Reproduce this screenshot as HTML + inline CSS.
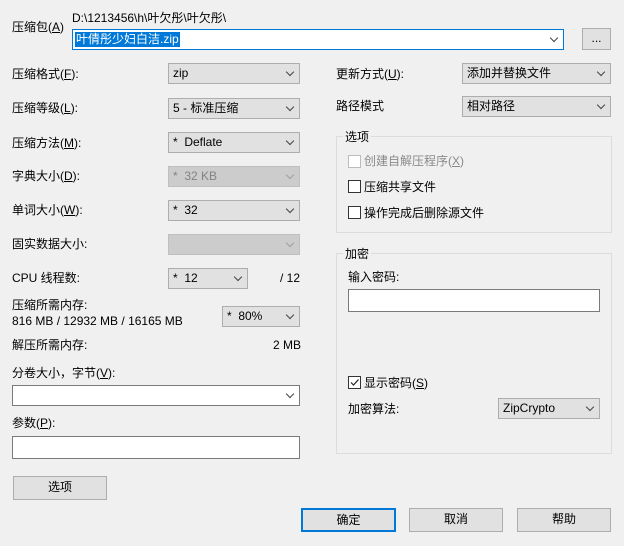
<!DOCTYPE html>
<html><head><meta charset="utf-8"><style>
body{margin:0;width:624px;height:546px;background:#f0f0f0;position:relative;overflow:hidden;font-family:"Liberation Sans","Noto Sans CJK SC",sans-serif;font-size:12px;color:#000}
.a{position:absolute;white-space:nowrap;line-height:14px}
.cb{position:absolute;box-sizing:border-box;border:1px solid #adadad;background:#e1e1e1;height:21px;line-height:19px;padding-left:4px}
.cb::after{content:"";position:absolute;right:6px;top:5px;width:5px;height:5px;border-right:1px solid #444;border-bottom:1px solid #444;transform:rotate(45deg)}
.dis{background:#cccccc;border-color:#bfbfbf;color:#838383}
.dis::after{border-color:#a0a0a0}
.w{position:absolute;box-sizing:border-box;border:1px solid #7a7a7a;background:#fff}
.btn{position:absolute;box-sizing:border-box;border:1px solid #adadad;background:#e1e1e1;text-align:center;line-height:21px}
.g{position:absolute;box-sizing:border-box;border:1px solid #dcdcdc}
.gt{position:absolute;background:#f0f0f0;padding:0 2px;line-height:14px}
.ck{position:absolute;width:11px;height:11px;border:1px solid #333;background:#fff}
</style></head><body>
<div class="a" style="left:12px;top:20px">压缩包(<u>A</u>)</div>
<div class="a" style="left:72px;top:11px">D:\1213456\h\叶欠彤\叶欠彤\</div>
<div class="w" style="left:72px;top:29px;width:492px;height:21px;border-color:#0078d7"><span style="position:absolute;left:2px;top:2px;background:#0078d7;color:#fff;line-height:15px;padding:0 1px">叶倩彤少妇白洁.zip</span></div>
<div class="cb" style="left:548px;top:30px;width:15px;height:19px;border:none;background:transparent"></div>
<div class="btn" style="left:582px;top:28px;width:29px;height:22px;line-height:18px">...</div>

<div class="a" style="left:12px;top:67px">压缩格式(<u>F</u>):</div>
<div class="cb" style="left:168px;top:63px;width:132px">zip</div>
<div class="a" style="left:12px;top:101px">压缩等级(<u>L</u>):</div>
<div class="cb" style="left:168px;top:98px;width:132px">5 - 标准压缩</div>
<div class="a" style="left:12px;top:136px">压缩方法(<u>M</u>):</div>
<div class="cb" style="left:168px;top:132px;width:132px">*&nbsp; Deflate</div>
<div class="a" style="left:12px;top:169px">字典大小(<u>D</u>):</div>
<div class="cb dis" style="left:168px;top:166px;width:132px">*&nbsp; 32 KB</div>
<div class="a" style="left:12px;top:203px">单词大小(<u>W</u>):</div>
<div class="cb" style="left:168px;top:200px;width:132px">*&nbsp; 32</div>
<div class="a" style="left:12px;top:237px">固实数据大小:</div>
<div class="cb dis" style="left:168px;top:234px;width:132px"></div>
<div class="a" style="left:12px;top:271px">CPU 线程数:</div>
<div class="cb" style="left:168px;top:268px;width:80px">*&nbsp; 12</div>
<div class="a" style="left:280px;top:271px">/ 12</div>
<div class="a" style="left:12px;top:298px">压缩所需内存:</div>
<div class="a" style="left:12px;top:314px">816 MB / 12932 MB / 16165 MB</div>
<div class="cb" style="left:222px;top:306px;width:78px">*&nbsp; 80%</div>
<div class="a" style="left:12px;top:338px">解压所需内存:</div>
<div class="a" style="left:273px;top:338px">2 MB</div>
<div class="a" style="left:12px;top:366px">分卷大小，字节(<u>V</u>):</div>
<div class="w cb" style="left:12px;top:385px;width:288px;background:#fff;border-color:#7a7a7a"></div>
<div class="a" style="left:12px;top:416px">参数(<u>P</u>):</div>
<div class="w" style="left:12px;top:436px;width:288px;height:23px"></div>
<div class="btn" style="left:13px;top:476px;width:94px;height:24px">选项</div>

<div class="a" style="left:336px;top:67px">更新方式(<u>U</u>):</div>
<div class="cb" style="left:462px;top:63px;width:149px">添加并替换文件</div>
<div class="a" style="left:336px;top:99px">路径模式</div>
<div class="cb" style="left:462px;top:96px;width:149px">相对路径</div>

<div class="g" style="left:336px;top:136px;width:276px;height:97px"></div>
<div class="gt" style="left:343px;top:130px">选项</div>
<div class="ck" style="left:348px;top:155px;border-color:#bcbcbc"></div>
<div class="a" style="left:364px;top:154px;color:#8a8a8a">创建自解压程序(<u>X</u>)</div>
<div class="ck" style="left:348px;top:180px"></div>
<div class="a" style="left:364px;top:180px">压缩共享文件</div>
<div class="ck" style="left:348px;top:206px"></div>
<div class="a" style="left:364px;top:206px">操作完成后删除源文件</div>

<div class="g" style="left:336px;top:253px;width:276px;height:201px"></div>
<div class="gt" style="left:343px;top:247px">加密</div>
<div class="a" style="left:348px;top:270px">输入密码:</div>
<div class="w" style="left:348px;top:289px;width:252px;height:23px"></div>
<div class="ck" style="left:348px;top:376px"><svg width="11" height="11" style="position:absolute;left:0;top:0"><path d="M2 5.5 L4.5 8 L9.5 2.5" stroke="#222" stroke-width="1.2" fill="none"/></svg></div>
<div class="a" style="left:364px;top:376px">显示密码(<u>S</u>)</div>
<div class="a" style="left:348px;top:402px">加密算法:</div>
<div class="cb" style="left:498px;top:398px;width:102px">ZipCrypto</div>

<div class="btn" style="left:301px;top:508px;width:95px;height:24px;border:2px solid #0078d7;line-height:20px">确定</div>
<div class="btn" style="left:409px;top:508px;width:94px;height:24px">取消</div>
<div class="btn" style="left:517px;top:508px;width:94px;height:24px">帮助</div>
</body></html>
